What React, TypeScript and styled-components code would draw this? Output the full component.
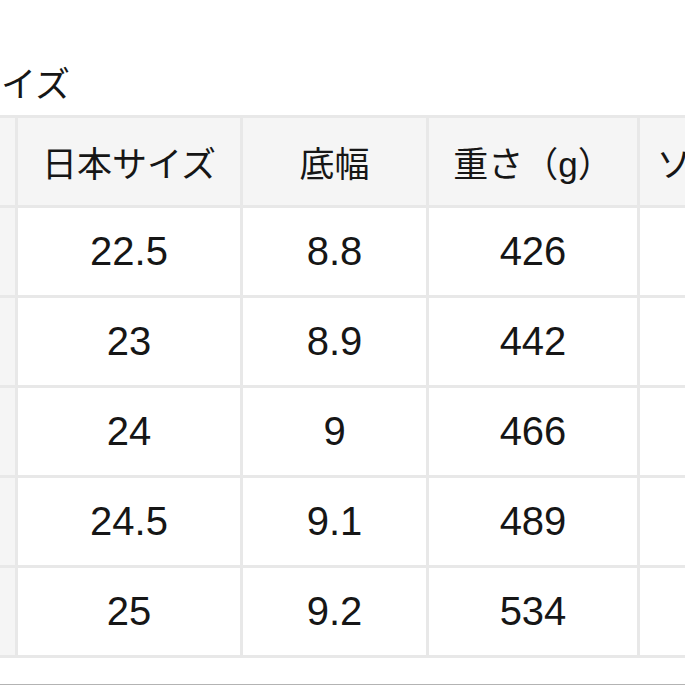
import styled, { createGlobalStyle } from 'styled-components';

const GlobalStyle = createGlobalStyle`
  html, body {
    margin: 0;
    padding: 0;
    background: #fff;
    overflow: hidden;
  }
  body {
    font-family: "Liberation Sans", "Noto Sans CJK JP", sans-serif;
    color: #161616;
  }
`;

const rows = [
  ['22.5', '8.8', '426'],
  ['23', '8.9', '442'],
  ['24', '9', '466'],
  ['24.5', '9.1', '489'],
  ['25', '9.2', '534'],
];

export default function App() {
  return (
    <>
      <GlobalStyle />
      <Page>
        <Title>サイズ</Title>
        <Table>
          <colgroup>
            <col style={{ width: 49 }} />
            <col style={{ width: 225 }} />
            <col style={{ width: 186 }} />
            <col style={{ width: 211 }} />
            <col style={{ width: 211 }} />
          </colgroup>
          <thead>
            <tr>
              <HeadCell />
              <HeadCell>日本サイズ</HeadCell>
              <HeadCell>底幅</HeadCell>
              <HeadCell>重さ（g）</HeadCell>
              <HeadCell>ソール厚さ</HeadCell>
            </tr>
          </thead>
          <tbody>
            {rows.map((r) => (
              <tr key={r[0]}>
                <SideCell />
                {r.map((v, i) => (
                  <Cell key={i}>{v}</Cell>
                ))}
                <Cell />
              </tr>
            ))}
          </tbody>
        </Table>
        <Rule />
      </Page>
    </>
  );
}

const Page = styled.div`
  margin-left: -34px;
  padding-top: 62px;
  width: 900px;
`;

const Title = styled.h2`
  margin: 0 0 7px;
  font-size: 35px;
  line-height: 46px;
  font-weight: 400;
`;

const Table = styled.table`
  border-collapse: collapse;
  table-layout: fixed;
  width: 882px;

  tr {
    height: 90px;
  }
`;

const HeadCell = styled.th`
  border: 3px solid #e8e8e8;
  background: #f5f5f5;
  font-size: 35px;
  font-weight: 400;
  text-align: center;
  padding: 0;
  white-space: nowrap;
`;

const SideCell = styled.td`
  border: 3px solid #e8e8e8;
  background: #f5f5f5;
`;

const Cell = styled.td`
  border: 3px solid #e8e8e8;
  background: #fff;
  font-size: 40px;
  text-align: center;
  padding: 0;
`;

const Rule = styled.div`
  margin-top: 26px;
  height: 2px;
  background: #b3b3b3;
`;
